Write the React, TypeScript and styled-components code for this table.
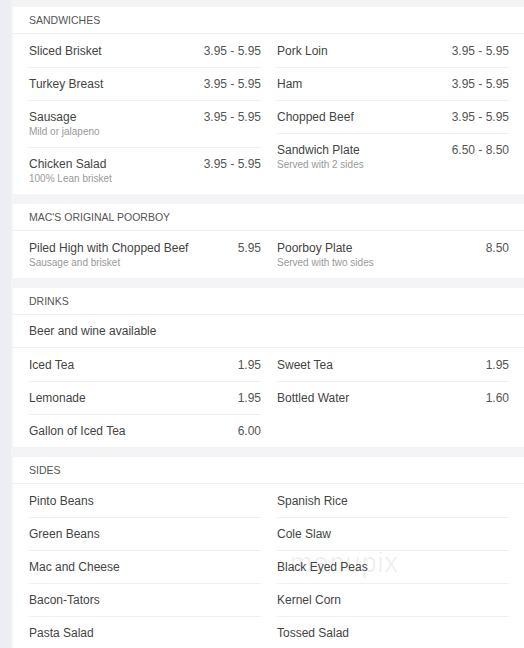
import styled, { createGlobalStyle } from "styled-components";

type Item = { name: string; price?: string; note?: string };

type Section = {
  title: string;
  intro?: string;
  left: Item[];
  right: Item[];
};

const menu: Section[] = [
  {
    title: "Sandwiches",
    left: [
      { name: "Sliced Brisket", price: "3.95 - 5.95" },
      { name: "Turkey Breast", price: "3.95 - 5.95" },
      { name: "Sausage", price: "3.95 - 5.95", note: "Mild or jalapeno" },
      { name: "Chicken Salad", price: "3.95 - 5.95", note: "100% Lean brisket" },
    ],
    right: [
      { name: "Pork Loin", price: "3.95 - 5.95" },
      { name: "Ham", price: "3.95 - 5.95" },
      { name: "Chopped Beef", price: "3.95 - 5.95" },
      { name: "Sandwich Plate", price: "6.50 - 8.50", note: "Served with 2 sides" },
    ],
  },
  {
    title: "Mac's Original Poorboy",
    left: [
      { name: "Piled High with Chopped Beef", price: "5.95", note: "Sausage and brisket" },
    ],
    right: [{ name: "Poorboy Plate", price: "8.50", note: "Served with two sides" }],
  },
  {
    title: "Drinks",
    intro: "Beer and wine available",
    left: [
      { name: "Iced Tea", price: "1.95" },
      { name: "Lemonade", price: "1.95" },
      { name: "Gallon of Iced Tea", price: "6.00" },
    ],
    right: [
      { name: "Sweet Tea", price: "1.95" },
      { name: "Bottled Water", price: "1.60" },
    ],
  },
  {
    title: "Sides",
    left: [
      { name: "Pinto Beans" },
      { name: "Green Beans" },
      { name: "Mac and Cheese" },
      { name: "Bacon-Tators" },
      { name: "Pasta Salad" },
    ],
    right: [
      { name: "Spanish Rice" },
      { name: "Cole Slaw" },
      { name: "Black Eyed Peas" },
      { name: "Kernel Corn" },
      { name: "Tossed Salad" },
    ],
  },
];

export default function App() {
  return (
    <>
      <GlobalStyle />
      <Page>
        <Strip />
        <Main>
          {menu.map((section) => (
            <Card key={section.title}>
              <CardHeader>{section.title}</CardHeader>
              {section.intro && <Intro>{section.intro}</Intro>}
              <Columns>
                {[section.left, section.right].map((column, i) => (
                  <Column key={i}>
                    {column.map((item) => (
                      <Row key={item.name}>
                        <ItemText>
                          <Name>{item.name}</Name>
                          {item.note && <Note>{item.note}</Note>}
                        </ItemText>
                        {item.price && <Price>{item.price}</Price>}
                      </Row>
                    ))}
                  </Column>
                ))}
              </Columns>
            </Card>
          ))}
          <Watermark>menupix</Watermark>
        </Main>
      </Page>
    </>
  );
}

const GlobalStyle = createGlobalStyle`
  body {
    margin: 0;
    background: #f4f4f6;
    font-family: "Liberation Sans", Arial, sans-serif;
    overflow: hidden;
  }
`;

const Page = styled.div`
  display: flex;
  min-height: 648px;
`;

const Strip = styled.div`
  width: 11px;
  flex: none;
  background: #eceef4;
`;

const Main = styled.div`
  position: relative;
  flex: none;
  width: 512px;
  padding: 7px 0 0 2px;
  display: flex;
  flex-direction: column;
  gap: 10px;
`;

const Card = styled.section`
  background: #fff;
`;

const CardHeader = styled.h2`
  margin: 0;
  height: 27px;
  padding: 0 16px;
  display: flex;
  align-items: center;
  font-size: 10.5px;
  font-weight: normal;
  text-transform: uppercase;
  color: #555;
  border-bottom: 1px solid #f0f0f0;
  box-sizing: border-box;
`;

const Intro = styled.div`
  height: 33px;
  padding: 0 16px;
  display: flex;
  align-items: center;
  font-size: 12px;
  color: #444;
  border-bottom: 1px solid #f0f0f0;
  box-sizing: border-box;
`;

const Columns = styled.div`
  display: grid;
  grid-template-columns: 232px 232px;
  column-gap: 16px;
  padding: 0 16px;
  align-items: start;
`;

const Column = styled.div`
  display: flex;
  flex-direction: column;
`;

const Row = styled.div`
  display: flex;
  justify-content: space-between;
  align-items: flex-start;
  padding: 8px 0;
  &:first-child {
    padding-top: 9px;
  }
  & + & {
    border-top: 1px solid #f0f0f0;
  }
`;

const ItemText = styled.div`
  display: flex;
  flex-direction: column;
`;

const Name = styled.span`
  font-size: 12px;
  line-height: 16px;
  color: #444;
`;

const Note = styled.span`
  font-size: 10px;
  line-height: 14px;
  color: #999;
`;

const Price = styled.span`
  font-size: 12px;
  line-height: 16px;
  color: #555;
  white-space: nowrap;
`;

const Watermark = styled.div`
  position: absolute;
  left: 279px;
  top: 548px;
  font-size: 27px;
  letter-spacing: 1px;
  color: rgba(0, 0, 0, 0.07);
  pointer-events: none;
`;
